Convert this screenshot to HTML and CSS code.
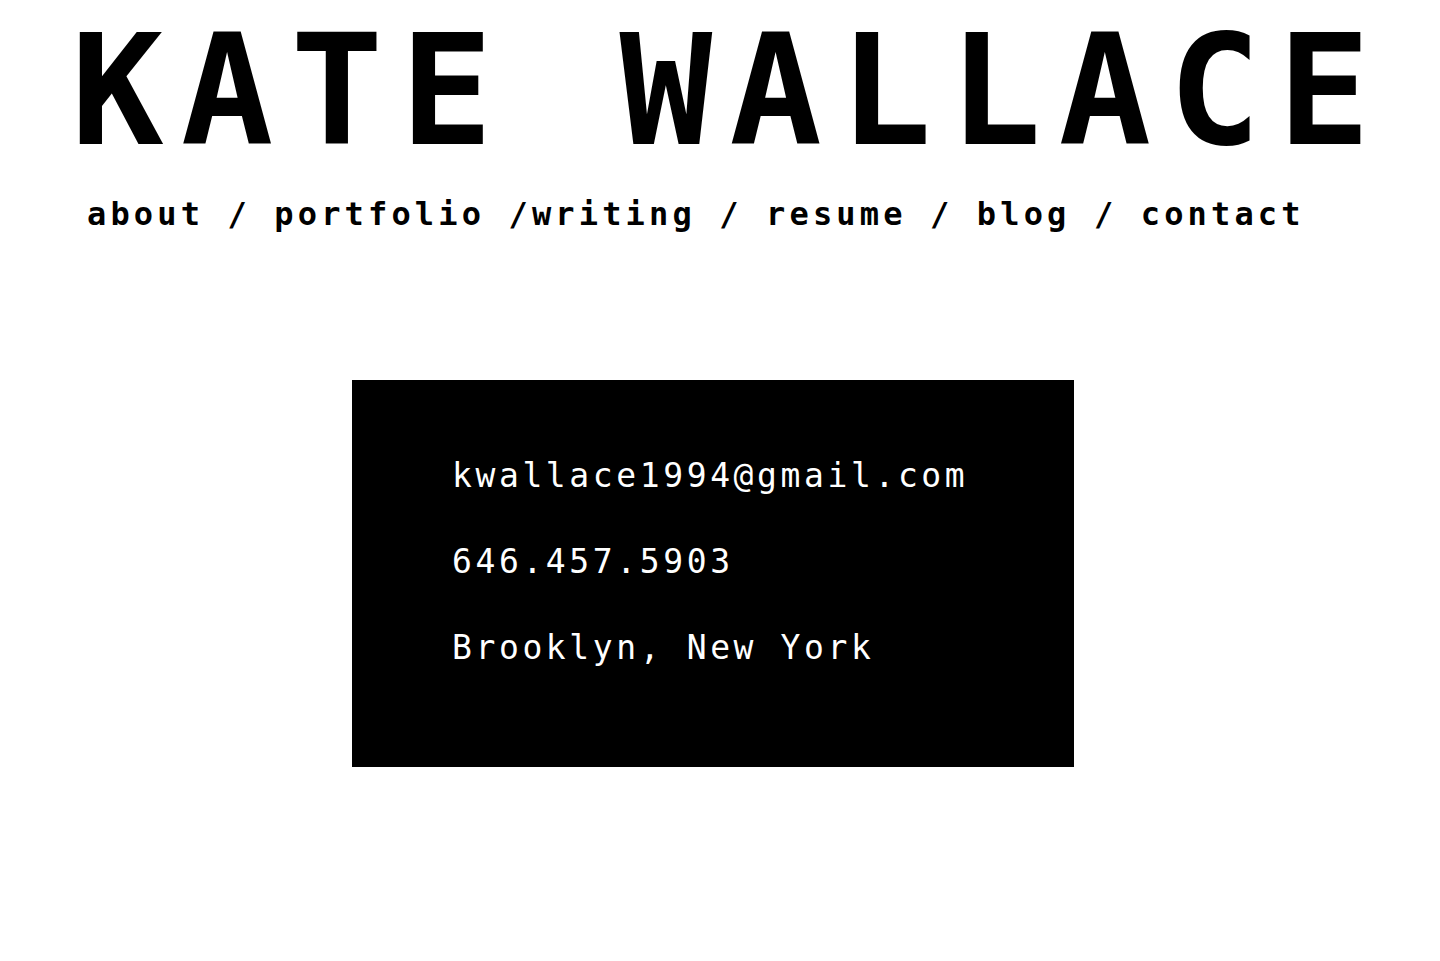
FILE: index.html
```html
<!DOCTYPE html>
<html lang="en">
<head>
<meta charset="utf-8">
<title>Kate Wallace — contact</title>
<link rel="stylesheet" href="styles.css">
</head>
<body>
<header class="site-header">
  <h1 class="site-title">KATE WALLACE</h1>
  <nav class="site-nav"><a href="#">about</a> / <a href="#">portfolio</a> /<a href="#">writing</a> / <a href="#">resume</a> / <a href="#">blog</a> / <a href="#">contact</a></nav>
</header>
<main class="content">
  <section class="contact-card">
    <p class="contact-line">kwallace1994@gmail.com</p>
    <p class="contact-line">646.457.5903</p>
    <p class="contact-line">Brooklyn, New York</p>
  </section>
</main>
</body>
</html>
```

FILE: styles.css
```css
html, body {
  margin: 0;
  padding: 0;
  background: #ffffff;
  color: #000000;
}

body {
  font-family: "DejaVu Sans Mono", "Liberation Mono", monospace;
}

.site-header {
  display: flex;
  flex-direction: column;
  padding-top: 14px;
}

.site-title {
  margin: 0;
  padding-left: 71px;
  font-size: 154px;
  line-height: 154px;
  font-weight: bold;
  letter-spacing: 17px;
  white-space: nowrap;
}

.site-nav {
  margin-top: 26px;
  padding-left: 87px;
  font-size: 32px;
  line-height: 40px;
  font-weight: bold;
  letter-spacing: 4.15px;
  white-space: nowrap;
}

.site-nav a {
  color: #000000;
  text-decoration: none;
}

.content {
  display: flex;
  padding-top: 146px;
  padding-left: 352px;
}

.contact-card {
  box-sizing: border-box;
  width: 722px;
  height: 387px;
  background: #000000;
  color: #ffffff;
  padding: 53px 0 0 100px;
}

.contact-line {
  margin: 0;
  font-size: 33px;
  line-height: 86px;
  letter-spacing: 3.6px;
  white-space: nowrap;
}
```
